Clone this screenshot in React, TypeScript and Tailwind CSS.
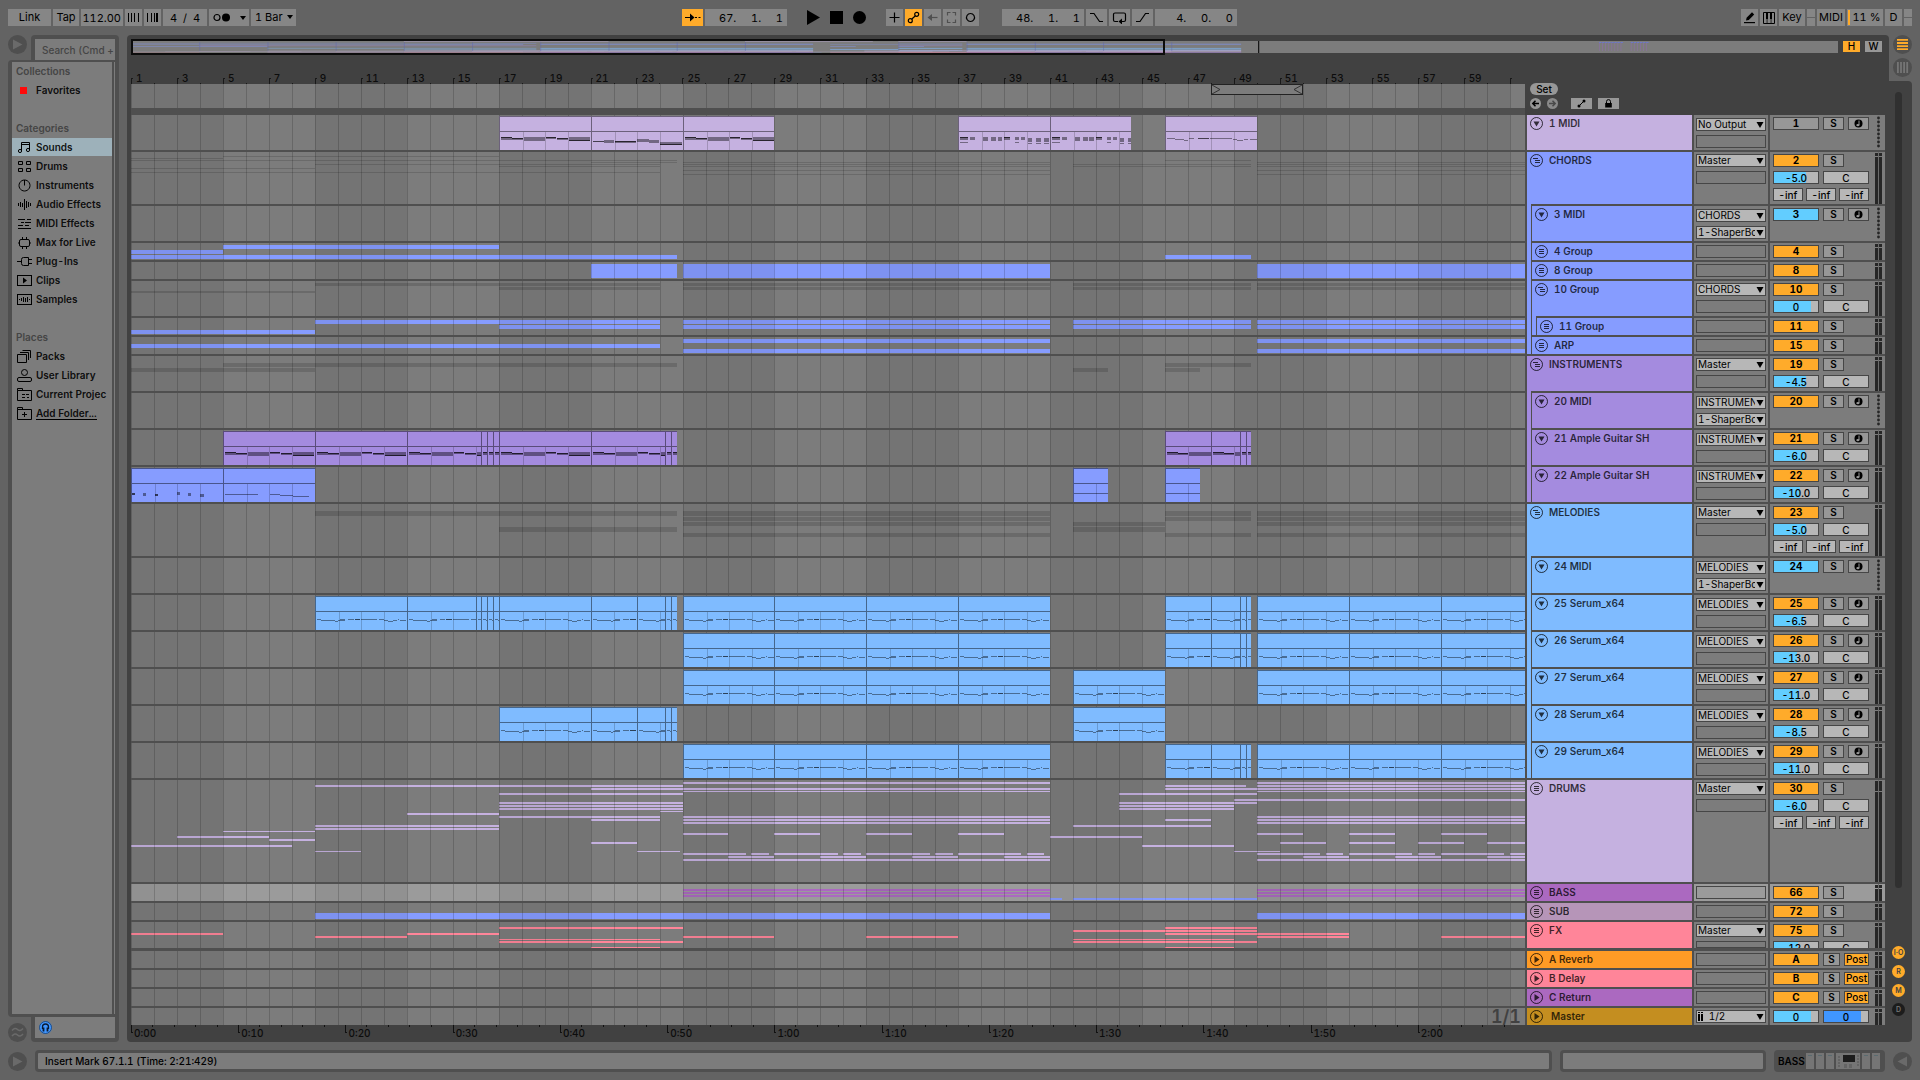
import type { ReactNode } from "react";
import clsx from "clsx";

const BARS = 60.66;
const SONG_END = 66.1;
const OVERVIEW_BARS = 100.1;

type Span = [start: number, end: number];
type Strip = { y: number; h: number; spans: Span[]; color?: string };
type Notes = "serum" | "guitar" | "piano" | "stabs" | "thin" | "dots" | "line" | "none";
type Clip = { at: number[]; notes: Notes; color?: string };

interface Track {
  name: string;
  label: string;
  color: string;
  height: string;
  px: number;
  level?: 0 | 1 | 2;
  icon: "fold" | "group" | "list" | "play";
  outputs?: string[];
  state?: "on" | "off" | "blue";
  arm?: boolean;
  post?: boolean;
  volume?: [text: string, fill: number];
  sends?: boolean;
  midiMeter?: boolean;
  selected?: boolean;
  clips?: Clip[];
  strips?: Strip[];
  shadow?: boolean;
}

const BLUE = "#869cff";
const SKY = "#7fbbff";
const LILAC = "#c5b1e0";
const VIOLET = "#a48bdf";
const PINK = "#ff8599";
const ORCHID = "#ab69c0";

const s = (y: number, h: number, ...spans: Span[]): Strip => ({ y, h, spans });
const main: Span[] = [[25, 41], [50, SONG_END]];

const serumClips = (...at: number[][]): Clip[] => at.map((a) => ({ at: a, notes: "serum" as Notes }));
const VERSE = [25, 29, 33, 37, 41];
const DROP = [46, 48, 49.25, 49.5, 49.75];
const OUTRO = [50, 54, 58, 62, SONG_END];

const tracks: Track[] = [
  {
    name: "1 MIDI", label: "1", color: LILAC, height: "h-[35px]", px: 35, icon: "fold",
    outputs: ["No Output"], state: "off", arm: true, midiMeter: true,
    clips: [
      { at: [17, 21], notes: "guitar" },
      { at: [21, 25], notes: "piano" },
      { at: [25, 29], notes: "guitar" },
      { at: [37, 41], notes: "stabs" },
      { at: [41, 44.5], notes: "stabs" },
      { at: [46, 50], notes: "thin" },
    ],
  },
  {
    name: "CHORDS", label: "2", color: BLUE, height: "h-[52px]", px: 52, icon: "group",
    outputs: ["Master"], volume: ["-5.0", 73], sends: true, shadow: true,
    strips: [
      s(4, 1, [5, 17]),
      s(6, 1, [1, 5]),
      s(8, 1, [1, 24.77], [46, 49.75]),
      s(10, 1, [21, 24.77], ...main),
      s(12, 1, [9, 24], [42, 49.75], ...main),
      s(14, 1, [17, 24], [42, 49.75], ...main),
      s(16, 1, [1, 9]),
      s(18, 1, ...main),
      s(20, 1, [1, 24]),
      s(22, 1, ...main),
    ],
  },
  {
    name: "3 MIDI", label: "3", color: BLUE, height: "h-[35px]", px: 35, level: 1, icon: "fold",
    outputs: ["CHORDS", "1-ShaperBox"], state: "blue", arm: true, midiMeter: true,
  },
  {
    name: "4 Group", label: "4", color: BLUE, height: "h-[17px]", px: 17, level: 1, icon: "list",
    strips: [s(2, 4, [5, 17]), s(7, 4, [1, 5]), s(12, 4, [1, 24.77], [46, 49.75])],
  },
  {
    name: "8 Group", label: "8", color: BLUE, height: "h-[17px]", px: 17, level: 1, icon: "list",
    strips: [s(2, 14, [21, 24.77], ...main)],
  },
  {
    name: "10 Group", label: "10", color: BLUE, height: "h-[35px]", px: 35, level: 1, icon: "group",
    outputs: ["CHORDS"], volume: ["0", 84], shadow: true,
    strips: [
      s(2, 3, [9, 24], [42, 49.75], ...main),
      s(6, 3, [17, 24], [42, 49.75], ...main),
      s(10, 2, [1, 9]),
    ],
  },
  {
    name: "11 Group", label: "11", color: BLUE, height: "h-[17px]", px: 17, level: 2, icon: "list",
    strips: [
      s(2, 4, [9, 24], [42, 49.75], ...main),
      s(7, 4, [17, 24], [42, 49.75], ...main),
      s(12, 4, [1, 9]),
    ],
  },
  {
    name: "ARP", label: "15", color: BLUE, height: "h-[17px]", px: 17, level: 1, icon: "list",
    strips: [s(2, 4, ...main), s(7, 4, [1, 24]), s(12, 4, ...main)],
  },
  {
    name: "INSTRUMENTS", label: "19", color: VIOLET, height: "h-[35px]", px: 35, icon: "group",
    outputs: ["Master"], volume: ["-4.5", 72], shadow: true,
    strips: [s(7, 4, [5, 24.77], [46, 49.75]), s(12, 4, [1, 9], [42, 43.5], [46, 47.5])],
  },
  {
    name: "20 MIDI", label: "20", color: VIOLET, height: "h-[35px]", px: 35, level: 1, icon: "fold",
    outputs: ["INSTRUMENTS", "1-ShaperBox"], arm: true, midiMeter: true,
  },
  {
    name: "21 Ample Guitar SH", label: "21", color: VIOLET, height: "h-[35px]", px: 35, level: 1, icon: "fold",
    outputs: ["INSTRUMENTS"], arm: true, volume: ["-6.0", 70],
    clips: [
      { at: [5, 9, 13, 16.25, 16.5, 16.77, 17, 21, 24.25, 24.5, 24.77], notes: "guitar" },
      { at: [46, 48, 49.25, 49.5, 49.75], notes: "guitar" },
    ],
  },
  {
    name: "22 Ample Guitar SH", label: "22", color: VIOLET, height: "h-[35px]", px: 35, level: 1, icon: "fold",
    outputs: ["INSTRUMENTS"], arm: true, volume: ["-10.0", 58],
    clips: [
      { at: [1, 5], notes: "dots", color: BLUE },
      { at: [5, 9], notes: "line", color: BLUE },
      { at: [42, 43.5], notes: "none", color: BLUE },
      { at: [46, 47.5], notes: "none", color: BLUE },
    ],
  },
  {
    name: "MELODIES", label: "23", color: SKY, height: "h-[52px]", px: 52, icon: "group",
    outputs: ["Master"], volume: ["-5.0", 73], sends: true, shadow: true,
    strips: [
      s(7, 5, [9, 24.77], [46, 49.75], ...main),
      s(13, 4, [46, 49.75], ...main),
      s(18, 4, [42, 46], ...main),
      s(23, 5, [17, 24.77], [42, 46]),
      s(29, 4, [46, 49.75], ...main),
    ],
  },
  {
    name: "24 MIDI", label: "24", color: SKY, height: "h-[35px]", px: 35, level: 1, icon: "fold",
    outputs: ["MELODIES", "1-ShaperBox"], state: "blue", arm: true, midiMeter: true,
  },
  {
    name: "25 Serum_x64", label: "25", color: SKY, height: "h-[35px]", px: 35, level: 1, icon: "fold",
    outputs: ["MELODIES"], arm: true, volume: ["-6.5", 68],
    clips: serumClips([9, 13, 16, 16.25, 16.5, 16.77, 17, 21, 23, 24.25, 24.5, 24.77], VERSE, DROP, OUTRO),
  },
  {
    name: "26 Serum_x64", label: "26", color: SKY, height: "h-[35px]", px: 35, level: 1, icon: "fold",
    outputs: ["MELODIES"], arm: true, volume: ["-13.0", 53],
    clips: serumClips(VERSE, DROP, OUTRO),
  },
  {
    name: "27 Serum_x64", label: "27", color: SKY, height: "h-[35px]", px: 35, level: 1, icon: "fold",
    outputs: ["MELODIES"], arm: true, volume: ["-11.0", 56],
    clips: serumClips(VERSE, [42, 46], OUTRO),
  },
  {
    name: "28 Serum_x64", label: "28", color: SKY, height: "h-[35px]", px: 35, level: 1, icon: "fold",
    outputs: ["MELODIES"], arm: true, volume: ["-8.5", 63],
    clips: serumClips([17, 21, 23, 24.25, 24.5, 24.77], [42, 46]),
  },
  {
    name: "29 Serum_x64", label: "29", color: SKY, height: "h-[35px]", px: 35, level: 1, icon: "fold",
    outputs: ["MELODIES"], arm: true, volume: ["-11.0", 56],
    clips: serumClips(VERSE, DROP, OUTRO),
  },
  {
    name: "DRUMS", label: "30", color: LILAC, height: "h-[102px]", px: 102, icon: "list",
    outputs: ["Master"], volume: ["-6.0", 70], sends: true,
    strips: [
      s(2, 2, ...main),
      s(5, 2, [9, 25], [46, 49.5], [50, SONG_END]),
      s(8, 2, [21, 25], [25, 41], [46, SONG_END]),
      s(11, 1, ...main),
      s(13, 2, [17, 25], [44, 50]),
      s(19, 2, [49, SONG_END]),
      s(22, 2, [17, 25], [44, 50]),
      s(25, 2, [17, 25], [44, 49]),
      s(28, 2, [17, 25], [44, 49]),
      s(31, 1, [24, 25]),
      s(33, 2, [13, 17]),
      s(36, 2, [17, 24], ...main),
      s(39, 2, [21, 24], [46, 48], ...main),
      s(42, 2, ...main),
      s(45, 2, [9, 17], [42, 48]),
      s(48, 2, [9, 17]),
      s(51, 1, [5, 9]),
      s(53, 2, [25, 27], [29, 31], [33, 35], [37, 39], [50, 52], [54, 56], [58, 60]),
      s(56, 2, [3, 7], [41, 45]),
      s(59, 2, [7, 9]),
      s(62, 2, [21, 23], [51, 53], [54, 56], [57, 59], [60, 62]),
      s(65, 2, [1, 8], [45, 49]),
      s(71, 1, [9, 11], [23, 24.9], [49, 51]),
      s(73, 2,
        [25, 27.75], [28, 28.75], [29, 31.75], [32, 32.75], [33, 35.75], [36, 36.75], [37, 39.75], [40, 40.75],
        [50, 52.75], [53, 53.75], [54, 56.75], [57, 57.75], [58, 60.75], [61, 61.75]),
      s(76, 2, [27, 29], [31, 33], [35, 37], [39, 41], [52, 54], [56, 58], [60, 62]),
      s(79, 2, ...main),
    ],
  },
  {
    name: "BASS", label: "66", color: ORCHID, height: "h-[17px]", px: 17, icon: "list", selected: true,
    strips: [
      s(5, 2, ...main),
      s(8, 2, ...main),
      s(11, 2, ...main),
      { y: 14, h: 2, spans: [[41, 41.5], [42, 50]], color: BLUE },
    ],
  },
  {
    name: "SUB", label: "72", color: "#b695b8", height: "h-[17px]", px: 17, icon: "list",
    strips: [{ y: 10, h: 6, spans: [[9, 41], [50, SONG_END]], color: BLUE }],
  },
  {
    name: "FX", label: "75", color: PINK, height: "h-[26px]", px: 26, icon: "list",
    outputs: ["Master"], volume: ["-12.0", 54],
    strips: [
      s(5, 2, [17, 25], [46, 50]),
      s(8, 2, [42, 50]),
      s(11, 2, [1, 5], [13, 17], [46, 54]),
      s(14, 2, [9, 13], [25, 29], [33, 37], [50, 54], [58, 62]),
      s(17, 1, [17, 24], [42, 49]),
      s(19, 2, [17, 25], [42, 50]),
      s(25, 1, [21, 24], [46, 49]),
    ],
  },
];

const returns: Track[] = [
  { name: "A Reverb", label: "A", color: "#ff9b25", height: "h-[17px]", px: 17, icon: "play", post: true },
  { name: "B Delay", label: "B", color: PINK, height: "h-[17px]", px: 17, icon: "play", post: true },
  { name: "C Return", label: "C", color: ORCHID, height: "h-[17px]", px: 17, icon: "play", post: true },
];

const pct = (bar: number) => `${((bar - 1) / BARS) * 100}%`;
const width = (a: number, b: number) => `${((b - a) / BARS) * 100}%`;

/* ---------- timeline ---------- */

const barNumbers = Array.from({ length: 61 }, (_, i) => i + 1);

const Grid = () => (
  <g fill="#000">
    {barNumbers.filter((b) => b % 8 === 1).map((b) => (
      <rect key={b} x={pct(b)} width={width(0, 4)} height="100%" opacity=".06" />
    ))}
    {barNumbers.map((b) => (
      <rect key={b} x={pct(b)} width="1" height="100%" opacity=".17" />
    ))}
  </g>
);

// [x, y, width, height, dark?] inside a four bar clip, 92 units wide
const noteShapes: Record<Notes, number[][]> = {
  serum: [
    [1, 7, 4, 1, 0], [5, 8, 14, 1, 0], [19, 9, 3, 1, 0], [22, 8, 2, 1, 0], [24, 7, 5, 2, 0],
    [32, 7, 6, 1, 0], [39, 7, 6, 1, 1], [46, 7, 16, 1, 0], [64, 7, 5, 1, 0], [69, 8, 4, 1, 0],
    [73, 9, 5, 1, 0], [78, 8, 4, 1, 0], [83, 7, 1, 1, 0], [85, 8, 6, 1, 0],
  ],
  guitar: [
    [1, 5, 11, 3, 0], [1, 5, 11, 1, 1], [12, 6, 11, 2, 0], [12, 6, 11, 1, 1], [24, 5, 22, 4, 0],
    [47, 5, 10, 2, 0], [47, 5, 10, 1, 1], [58, 6, 11, 2, 0], [58, 6, 11, 1, 1], [70, 5, 21, 4, 0], [70, 8, 21, 1, 1],
  ],
  piano: [
    [1, 9, 11, 1, 1], [12, 8, 10, 3, 0], [23, 9, 22, 2, 0], [23, 9, 22, 1, 1], [46, 7, 12, 3, 0],
    [58, 8, 10, 3, 0], [69, 10, 22, 3, 0], [69, 12, 22, 1, 1],
  ],
  stabs: [
    [1, 5, 8, 3, 0], [1, 5, 8, 1, 1], [1, 10, 8, 1, 0], [11, 5, 5, 3, 0], [24, 5, 5, 4, 0], [32, 5, 5, 4, 0],
    [39, 5, 5, 4, 0], [46, 5, 6, 3, 0], [46, 5, 6, 1, 1], [57, 5, 4, 3, 0], [63, 5, 4, 3, 0], [70, 6, 4, 4, 0],
    [78, 6, 5, 4, 0], [86, 6, 5, 4, 0], [57, 10, 4, 1, 0], [70, 11, 4, 1, 0], [78, 11, 5, 1, 0], [86, 11, 5, 1, 0],
  ],
  thin: [
    [1, 6, 8, 1, 0], [9, 7, 9, 1, 0], [18, 8, 4, 1, 0], [23, 6, 5, 1, 0], [32, 6, 12, 1, 1], [45, 6, 22, 1, 0],
    [68, 7, 4, 1, 0], [72, 8, 6, 1, 0], [79, 7, 4, 1, 0], [85, 7, 7, 1, 0],
  ],
  dots: [
    [0, 9, 3, 2, 1], [11, 9, 3, 3, 0], [23, 10, 3, 2, 1], [46, 8, 3, 3, 0], [57, 9, 3, 3, 0], [69, 10, 4, 3, 0],
  ],
  line: [[1, 10, 33, 1, 0], [47, 10, 10, 1, 0], [57, 11, 13, 1, 0], [70, 12, 16, 1, 0]],
  none: [[0, 9, 92, 1, 0]],
};

const ClipBox = ({ from, to, notes, color }: { from: number; to: number; notes: Notes; color: string }) => {
  const length = to - from;
  const beats = barNumbers.filter((b) => b > from && b < to);
  return (
    <div
      className="absolute top-px bottom-0 flex flex-col overflow-hidden border-t border-l border-black/45"
      style={{ left: pct(from), width: width(from, to), backgroundColor: color }}
    >
      <div className="h-[15px] shrink-0 border-b border-black/45" />
      <svg className="block h-[18px] w-full" shapeRendering="crispEdges">
        {beats.map((b) => (
          <rect key={b} x={`${((b - from) / length) * 100}%`} width="1" height="18" fill="#000" opacity=".18" />
        ))}
        {noteShapes[notes].map(([x, y, w, h, dark], i) => (
          <rect
            key={i}
            x={`${(x / 23 / length) * 100}%`}
            y={y}
            width={`${(w / 23 / length) * 100}%`}
            height={h}
            opacity={dark ? 0.65 : 0.42}
          />
        ))}
      </svg>
    </div>
  );
};

const Lane = ({ track }: { track: Track }) => (
  <div className={clsx("relative min-w-0 flex-1 overflow-hidden", track.selected ? "bg-[#9b9b9b]" : "bg-[#7c7c7c]")}>
    <svg className="block h-full w-full" shapeRendering="crispEdges">
      {track.strips?.map((strip) =>
        strip.spans.map(([a, b]) => (
          <rect
            key={`${strip.y}-${a}`}
            x={pct(a)}
            y={strip.y}
            width={width(a, b)}
            height={strip.h}
            fill={track.shadow ? "#000" : strip.color ?? track.color}
            opacity={track.shadow ? 0.14 : 1}
          />
        ))
      )}
      <Grid />
    </svg>
    {track.clips?.map((clip) =>
      clip.at.slice(0, -1).map((from, i) => (
        <ClipBox
          key={from}
          from={from}
          to={clip.at[i + 1]}
          notes={clip.notes}
          color={clip.color ?? track.color}
        />
      ))
    )}
  </div>
);

/* ---------- track header ---------- */

const HeaderIcon = ({ kind }: { kind: Track["icon"] }) => (
  <svg viewBox="0 0 13 13" className="size-[13px]" fill="none" stroke="#000" strokeOpacity=".75">
    <circle cx="6.5" cy="6.5" r="6" />
    {kind === "fold" && <path d="M3.5 4.5h6l-3 5z" fill="#000" fillOpacity=".75" stroke="none" />}
    {kind === "play" && <path d="M4.5 3v7l5-3.5z" fill="#000" fillOpacity=".75" stroke="none" />}
    {kind === "list" && <path d="M4 4.5h5M4 6.5h5M4 8.5h5" />}
    {kind === "group" && <path d="M3 4.5h5M5 6.5h5M5 8.5h5" />}
  </svg>
);

const TrackHeader = ({ track }: { track: Track }) => {
  const level = track.level ?? 0;
  return (
    <div className="flex w-[165px] shrink-0">
      {level > 0 && (
        <div className="-mt-0.5 w-1 shrink-0" style={{ backgroundColor: track.color }} />
      )}
      {level > 1 && (
        <div className="-mt-0.5 ml-px w-1 shrink-0" style={{ backgroundColor: track.color }} />
      )}
      <div
        className={clsx("flex min-w-0 flex-1 gap-1.5 pt-0.5 pl-[3px]", level > 0 && "ml-px")}
        style={{ backgroundColor: track.color }}
      >
        <button className="size-[13px] shrink-0" aria-label={`Fold ${track.name}`}>
          <HeaderIcon kind={track.icon} />
        </button>
        <span className="truncate text-[10px] leading-3 font-semibold text-black/75">{track.name}</span>
      </div>
    </div>
  );
};

const OutputSelect = ({ value, label }: { value: string; label: string }) => (
  <div className="relative h-[13px] border border-[#464646] bg-[#b7b7b7]">
    <select
      aria-label={label}
      className="block h-[11px] w-full appearance-none overflow-hidden pr-2.5 pl-px text-[10px] leading-[11px] text-black outline-none"
    >
      <option>{value}</option>
    </select>
    <svg viewBox="0 0 8 6" className="pointer-events-none absolute top-[3px] right-px h-1.5 w-2">
      <path d="M.5 0h7L4 6z" />
    </svg>
  </div>
);

const EmptyBox = () => <div className="h-[13px] border border-[#464646]" />;

const panelBg = (track: Track) => (track.selected ? "bg-[#9b9b9b]" : "bg-[#7c7c7c]");

const TrackRouting = ({ track }: { track: Track }) => {
  const outs = track.outputs ?? [];
  const tall = track.icon === "fold";
  return (
    <div
      className={clsx("flex w-[74px] shrink-0 flex-col gap-1 overflow-hidden px-0.5", tall ? "pt-[3px]" : "pt-0.5", panelBg(track))}
    >
      {outs.map((o) => (
        <OutputSelect key={o} value={o} label={`${track.name} output`} />
      ))}
      {outs.length < 2 && <EmptyBox />}
    </div>
  );
};

const StereoMeter = ({ split = 3 }: { split?: number }) => (
  <svg className="h-full w-[7px]" shapeRendering="crispEdges" fill="#262626">
    <rect y="1" width="3" height={split} />
    <rect x="4" y="1" width="3" height={split} />
    <rect y={split + 2} width="3" height="100%" />
    <rect x="4" y={split + 2} width="3" height="100%" />
    <rect x="3" width="1" height="100%" fill="#6c6c6c" />
  </svg>
);

const DotMeter = () => (
  <svg viewBox="0 0 7 35" className="h-[35px] w-[7px]" fill="#262626">
    {[0, 1, 2, 3, 4, 5, 6, 7].map((i) => (
      <circle key={i} cx="3.5" cy={3 + i * 4} r="1.4" />
    ))}
  </svg>
);

const Field = ({ value, label, className, fill, fillColor = "#62cdff" }: {
  value: string;
  label: string;
  className: string;
  fill?: number;
  fillColor?: string;
}) => (
  <input
    readOnly
    aria-label={label}
    value={value}
    className={clsx("block h-[13px] border border-[#464646] bg-[#b7b7b7] text-center text-[10px] leading-[11px] font-medium text-black outline-none", className)}
    style={fill ? { backgroundImage: `linear-gradient(90deg, ${fillColor} ${fill}%, transparent ${fill}%)` } : undefined}
  />
);

const smallButton = "flex h-[13px] items-center justify-center border border-[#464646] text-[10px] leading-[11px] text-black";

const TrackMixer = ({ track }: { track: Track }) => (
  <div className={clsx("flex w-[115px] shrink-0 justify-between overflow-hidden px-[3px]", panelBg(track))}>
    <div className="flex flex-col gap-1 pt-0.5">
      <div className="flex gap-1">
        <button
          aria-label={`${track.name} activator`}
          className={clsx(
            smallButton,
            "w-[46px] font-bold",
            track.state === "off" && "bg-[#979797]",
            track.state === "blue" && "bg-[#62cdff]",
            !track.state && "bg-[#ffab2a]"
          )}
        >
          {track.label}
        </button>
        <button aria-label={`Solo ${track.name}`} className={clsx(smallButton, "bg-[#979797] font-semibold", track.post ? "w-[17px]" : "w-[21px]")}>
          S
        </button>
        {track.arm && (
          <button aria-label={`Arm ${track.name}`} className={clsx(smallButton, "w-[21px] bg-[#979797]")}>
            <svg viewBox="0 0 9 9" className="size-[9px]">
              <circle cx="4.5" cy="4.5" r="4" />
              <path d="M5 1.5v4.5" stroke="#979797" />
              <ellipse cx="3.9" cy="6.2" rx="1.6" ry="1.1" fill="#979797" />
            </svg>
          </button>
        )}
        {track.post && (
          <button aria-label={`${track.name} pre/post`} className={clsx(smallButton, "w-[25px] bg-[#ffab2a] font-medium")}>
            Post
          </button>
        )}
      </div>
      {track.volume && (
        <div className="flex gap-1">
          <Field value={track.volume[0]} fill={track.volume[1]} label={`${track.name} volume`} className="w-[46px]" />
          <Field value="C" label={`${track.name} pan`} className="w-[46px]" />
        </div>
      )}
      {track.sends && (
        <div className="flex gap-[3px]">
          {["A", "B", "C"].map((send) => (
            <Field key={send} value="-inf" label={`${track.name} send ${send}`} className="w-[30px]" />
          ))}
        </div>
      )}
    </div>
    {track.midiMeter ? <DotMeter /> : <StereoMeter split={track.px > 60 ? 10 : 3} />}
  </div>
);

const TrackRow = ({ track }: { track: Track }) => (
  <div className={clsx("flex gap-0.5", track.height)}>
    <Lane track={track} />
    <TrackHeader track={track} />
    <TrackRouting track={track} />
    <TrackMixer track={track} />
  </div>
);

const MasterRow = () => (
  <div className="flex h-[17px] gap-0.5">
    <div className="relative min-w-0 flex-1 bg-[#7c7c7c]">
      <svg className="block h-full w-full" shapeRendering="crispEdges">
        <Grid />
      </svg>
      <span className="absolute right-1 bottom-0 text-lg leading-[17px] font-semibold text-[#414141]">1/1</span>
    </div>
    <div className="flex w-[165px] shrink-0 gap-2 bg-[#c48e20] pt-0.5 pl-[3px]">
      <button className="size-[13px]" aria-label="Fold Master">
        <HeaderIcon kind="play" />
      </button>
      <span className="text-[10px] leading-3 font-semibold text-black/75">Master</span>
    </div>
    <div className="w-[74px] shrink-0 bg-[#7c7c7c] px-0.5 pt-0.5">
      <div className="relative">
        <OutputSelect value={"\u00a0\u00a0\u00a0 1/2"} label="Master output" />
        <svg viewBox="0 0 5 9" className="pointer-events-none absolute top-0.5 left-0.5 h-[9px] w-[5px]" shapeRendering="crispEdges">
          <path d="M0 0h2v1H0zM3 0h2v1H3zM0 2h2v7H0zM3 2h2v7H3z" />
        </svg>
      </div>
    </div>
    <div className="flex w-[115px] shrink-0 justify-between bg-[#7c7c7c] px-[3px]">
      <div className="flex gap-1 pt-0.5">
        <Field value="0" fill={84} label="Master volume" className="w-[46px]" />
        <Field value="0" fill={84} fillColor="#4096ff" label="Cue volume" className="w-[46px]" />
      </div>
      <StereoMeter />
    </div>
  </div>
);

/* ---------- overview and rulers ---------- */

const Overview = () => {
  const x = (bar: number) => ((bar - 1) / OVERVIEW_BARS) * 1000;
  let top = 0;
  const shapes: ReactNode[] = [];
  tracks.forEach((t) => {
    const y = (top / 833) * 12;
    t.clips?.forEach((c) => {
      const last = c.at[c.at.length - 1];
      shapes.push(
        <rect key={`${t.name}${c.at[0]}`} x={x(c.at[0])} y={y} width={x(last) - x(c.at[0])} height=".6" fill={c.color ?? t.color} opacity=".6" />
      );
    });
    if (!t.shadow) {
      t.strips?.forEach((st) =>
        st.spans.forEach(([a, b]) =>
          shapes.push(
            <rect key={`${t.name}${st.y}-${a}`} x={x(a)} y={y + (st.y / 833) * 12} width={x(b) - x(a)} height={Math.max(0.25, (st.h / 833) * 12)} fill={st.color ?? t.color} opacity=".55" />
          )
        )
      );
    }
    top += t.px + 2;
  });
  return (
    <div className="relative h-4 min-w-0 flex-1 py-0.5">
      <svg viewBox="0 0 1000 12" preserveAspectRatio="none" className="block h-3 w-full bg-[#7c7c7c]">
        {shapes}
        {[5, 9, 13, 17, 21, 25, 29, 33, 37, 46, 50, 54, 58, 62].map((b) => (
          <rect key={b} x={x(b)} y="1" width=".6" height="9" fill="#5c64b0" opacity=".4" />
        ))}
        <rect x={x(67.1)} width=".6" height="12" />
        {[0, 3, 6, 9, 12, 15, 18, 21, 31, 34, 37, 40, 43, 46].map((i) => (
          <g key={i} transform={`translate(${860 + i * 0.6} 0)`}>
            <rect y="1" width="1.4" height="1" fill="#6d78c8" />
            <rect y="2" width=".5" height="8" fill="#8d6fa8" opacity=".7" />
          </g>
        ))}
      </svg>
      <div className="absolute inset-y-0 left-0 border-2 border-[#0c0c0c]" style={{ width: `${(BARS / OVERVIEW_BARS) * 100}%` }} />
    </div>
  );
};

const BarRuler = () => (
  <div className="flex h-[29px] items-end overflow-hidden text-[#0c0c0c]">
    {Array.from({ length: 31 }, (_, i) => i * 2 + 1).map((bar) => (
      <div key={bar} className="flex h-3 shrink-0 items-end" style={{ width: width(0, 2) }}>
        <div className="flex w-1/2 items-end">
          <div className="h-1.5 w-0.5 border-t border-l border-[#191919]" />
          <span className="mb-px pl-[3px] text-[10px] leading-[10px] font-medium">{bar < 61 && bar}</span>
        </div>
        <div className="h-px w-px bg-[#191919]" />
      </div>
    ))}
  </div>
);

const SECONDS = (BARS * 240) / 112;

const TimeRuler = () => (
  <div className="flex h-[17px] overflow-hidden">
    {Array.from({ length: 14 }, (_, i) => i * 10).map((t) => (
      <div key={t} className="relative shrink-0" style={{ width: `${(10 / SECONDS) * 100}%` }}>
        <svg className="absolute h-2 w-full" shapeRendering="crispEdges" fill="#111">
          <rect width="1" height="8" />
          <rect y="7" width="2" height="1" />
          {[20, 40, 60, 80].map((p) => (
            <rect key={p} x={`${p}%`} width="1" height="2" />
          ))}
        </svg>
        {t < 130 && (
          <span className="block pt-0.5 pl-[3px] text-[10px] leading-3 font-medium text-[#0c0c0c]">
            {Math.floor(t / 60)}:{String(t % 60).padStart(2, "0")}
          </span>
        )}
      </div>
    ))}
  </div>
);

const ScrubArea = () => (
  <div className="relative h-6 bg-[#7c7c7c]">
    <svg className="block h-full w-full" shapeRendering="crispEdges">
      <Grid />
    </svg>
    <div
      className="absolute top-0 flex h-[11px] justify-between border border-[#222] bg-[#7c7c7c]"
      style={{ left: pct(48), width: width(0, 4) }}
    >
      <svg viewBox="0 0 9 9" className="size-[9px]" fill="none" stroke="#333">
        <path d="M0 0l8 4.5L0 9" />
      </svg>
      <svg viewBox="0 0 9 9" className="size-[9px]" fill="none" stroke="#333">
        <path d="M9 0L1 4.5 9 9" />
      </svg>
    </div>
  </div>
);

const LocatorTools = () => (
  <div className="flex flex-col gap-[3px] pt-[28px] pl-[3px]">
    <button className="h-3 w-7 rounded-full bg-[#979797] text-[10px] leading-3 font-medium text-black">Set</button>
    <div className="flex items-center">
      <button aria-label="Previous locator" className="size-[11px] rounded-full bg-[#979797]">
        <svg viewBox="0 0 11 11" fill="none" stroke="#000" strokeWidth="1.5">
          <path d="M9 5.5H3M5.5 2.8L2.8 5.5l2.7 2.7" />
        </svg>
      </button>
      <button aria-label="Next locator" className="ml-1.5 size-[11px] rounded-full bg-[#8a8a8a]">
        <svg viewBox="0 0 11 11" fill="none" stroke="#4a4a4a" strokeWidth="1.5">
          <path d="M2 5.5h6M5.5 2.8l2.7 2.7-2.7 2.7" />
        </svg>
      </button>
      <button aria-label="Automation mode" className="ml-[13px] flex h-[11px] w-[21px] items-center justify-center bg-[#979797]">
        <svg viewBox="0 0 9 9" className="size-[9px]">
          <path d="M2 7l5-5" stroke="#000" />
          <circle cx="2" cy="7" r="1.5" />
          <circle cx="7" cy="2" r="1.5" />
        </svg>
      </button>
      <button aria-label="Lock envelopes" className="ml-1.5 flex h-[11px] w-[21px] items-center justify-center bg-[#979797]">
        <svg viewBox="0 0 9 9" className="size-[9px]">
          <path d="M2.5 4V2.6a2 2 0 0 1 4 0V4" fill="none" stroke="#000" />
          <path d="M1.2 4h6.6v4.5H1.2z" />
        </svg>
      </button>
    </div>
  </div>
);

/* ---------- top bar ---------- */

const TopButton = ({ className, label, children }: { className: string; label?: string; children?: ReactNode }) => (
  <button
    aria-label={label}
    className={clsx("flex h-[17px] shrink-0 items-center justify-center text-[11px] leading-[17px]", className)}
  >
    {children}
  </button>
);

const gray = "bg-[#868686]";

const Position = ({ value, label }: { value: string; label: string }) => (
  <input
    readOnly
    aria-label={label}
    value={value}
    className="h-[17px] w-[82px] bg-[#868686] pr-1 text-right text-[11px] text-black outline-none"
  />
);

const Stroke = ({ d, w = 13, children }: { d: string; w?: number; children?: ReactNode }) => (
  <svg viewBox={`0 0 ${w} 13`} className="h-[13px]" width={w} fill="none" stroke="currentColor" strokeWidth="1.2">
    <path d={d} />
    {children}
  </svg>
);

const SplitLamp = () => (
  <div className="flex w-2 flex-col gap-px">
    <div className="flex-1 bg-[#868686]" />
    <div className="flex-1 bg-[#868686]" />
  </div>
);

const TopBar = () => (
  <header className="flex px-2 py-[9px] text-black">
    <div className="flex gap-0.5">
      <TopButton className={clsx(gray, "w-[43px]")}>Link</TopButton>
      <TopButton className={clsx(gray, "w-[26px]")}>Tap</TopButton>
      <input readOnly aria-label="Tempo" value="112.00" className="h-[17px] w-[42px] bg-[#868686] pr-0.5 text-right text-[11px] text-black outline-none" />
      <TopButton label="Nudge down" className={clsx(gray, "w-[17px]")}>
        <svg viewBox="0 0 13 9" className="h-[9px] w-[13px]" shapeRendering="crispEdges">
          <path d="M1 0h1v9H1zM4 0h1v9H4zM7 0h1v9H7zM11 0h1v9h-1z" />
        </svg>
      </TopButton>
      <TopButton label="Nudge up" className={clsx(gray, "w-[17px]")}>
        <svg viewBox="0 0 13 9" className="h-[9px] w-[13px]" shapeRendering="crispEdges">
          <path d="M1 0h1v9H1zM5 0h1v9H5zM8 0h1v9H8zM10 0h2v9h-2z" />
        </svg>
      </TopButton>
      <input readOnly aria-label="Time signature" value="4  /  4" className="h-[17px] w-11 bg-[#868686] text-center text-[11px] text-black outline-none" />
      <TopButton label="Metronome" className={clsx(gray, "w-10 gap-2.5")}>
        <svg viewBox="0 0 17 9" className="h-[9px] w-[17px]">
          <circle cx="4" cy="4.5" r="3" fill="none" stroke="#000" strokeWidth="1.2" />
          <circle cx="13" cy="4.5" r="4" />
        </svg>
        <svg viewBox="0 0 6 4" className="h-1 w-1.5"><path d="M0 0h6L3 4z" /></svg>
      </TopButton>
      <div className="relative">
        <select aria-label="Quantization" className="block h-[17px] w-[45px] appearance-none bg-[#868686] pl-1 text-[11px] leading-[17px] text-black outline-none">
          <option>1 Bar</option>
        </select>
        <svg viewBox="0 0 6 4" className="pointer-events-none absolute top-1.5 right-[3px] h-1 w-1.5"><path d="M0 0h6L3 4z" /></svg>
      </div>
    </div>

    <div className="grow-[386]" />

    <div className="flex items-start gap-0.5">
      <TopButton label="Follow" className="w-[21px] bg-[#ffab2a]">
        <Stroke w={17} d="M1 6.5h6M11 6.5h2M14.5 6.5h2">
          <path d="M6 2.5l4.5 4-4.5 4z" fill="#000" stroke="none" />
        </Stroke>
      </TopButton>
      <Position label="Arrangement position" value="67.     1.     1" />
      <div className="flex gap-2.5 px-[18px]">
        <button aria-label="Play" className="h-[17px]">
          <svg viewBox="0 0 13 15" className="h-[15px] w-[13px]"><path d="M0 0l13 7.5L0 15z" /></svg>
        </button>
        <button aria-label="Stop" className="h-[17px]">
          <svg viewBox="0 0 13 13" className="size-[13px]"><path d="M0 0h13v13H0z" /></svg>
        </button>
        <button aria-label="Record" className="h-[17px]">
          <svg viewBox="0 0 13 13" className="size-[13px]"><circle cx="6.5" cy="6.5" r="6.5" /></svg>
        </button>
      </div>
      <TopButton label="Overdub" className={clsx(gray, "w-[17px]")}><Stroke d="M6.5 1.5v10M1.5 6.5h10" /></TopButton>
      <TopButton label="Automation arm" className="w-[17px] bg-[#ffab2a]">
        <Stroke d="M4.6 8.2L8.4 4.8">
          <circle cx="3.3" cy="9.7" r="2" />
          <circle cx="9.7" cy="3.3" r="2" />
        </Stroke>
      </TopButton>
      <TopButton label="Re-enable automation" className={clsx(gray, "w-[17px] text-[#4f4f4f]")}>
        <Stroke d="M5 6.5h6.5"><path d="M1.5 6.5l4.5-3.5v7z" fill="currentColor" stroke="none" /></Stroke>
      </TopButton>
      <TopButton label="Capture MIDI" className={clsx(gray, "w-[17px] text-[#4f4f4f]")}>
        <Stroke d="M2.5 4.500v-3h3M7.500 1.500h3v3M10.500 8.500v3h-3M5.500 11.500h-3v-3" />
      </TopButton>
      <TopButton label="Session record" className={clsx(gray, "w-[17px]")}>
        <Stroke d="M6.5 2.5a4 4 0 1 0 .01 0z" />
      </TopButton>
      <div className="ml-[21px] flex gap-0.5">
        <Position label="Loop start" value="48.     1.     1" />
        <TopButton label="Punch in" className={clsx(gray, "w-[21px]")}><Stroke w={15} d="M1 2.5h4l5.5 8H14" /></TopButton>
        <TopButton label="Loop" className={clsx(gray, "w-[21px]")}>
          <Stroke w={15} d="M6 10.5H3A1.5 1.5 0 0 1 1.5 9V3.5A1.5 1.5 0 0 1 3 2h9a1.5 1.5 0 0 1 1.5 1.5V9a1.5 1.5 0 0 1-1.5 1.5H9.5">
            <path d="M10 7.5v6l-3.5-3z" fill="#000" stroke="none" />
          </Stroke>
        </TopButton>
        <TopButton label="Punch out" className={clsx(gray, "w-[21px]")}><Stroke w={15} d="M1 10.5h4l5.5-8H14" /></TopButton>
        <Position label="Loop length" value="4.     0.     0" />
      </div>
    </div>

    <div className="grow-[504]" />

    <div className="flex gap-0.5">
      <TopButton label="Draw mode" className={clsx(gray, "w-[17px]")}>
        <svg viewBox="0 0 13 13" className="size-[13px]">
          <path d="M3 9.5l.6-2.8L9 1.3l2.2 2.2L5.8 9z" />
          <path d="M1 11h11v1.2H1z" />
        </svg>
      </TopButton>
      <TopButton label="Computer MIDI keyboard" className={clsx(gray, "w-[17px]")}>
        <svg viewBox="0 0 12 12" className="size-3">
          <path d="M.5.5h11v11H.5z" fill="none" stroke="#000" />
          <path d="M3 1h2v6H3zM7 1h2v6H7zM3.7 7h.7v4h-.7zM7.7 7h.7v4h-.7z" />
        </svg>
      </TopButton>
      <TopButton className={clsx(gray, "w-[26px]")}>Key</TopButton>
      <SplitLamp />
      <TopButton className={clsx(gray, "w-7")}>MIDI</TopButton>
      <div className="flex h-[17px] w-9 bg-[#868686] py-px pl-px text-[11px] leading-[15px]">
        <div className="w-0.5 bg-[#ffab2a]" />
        <span className="flex-1 text-center whitespace-nowrap">11 %</span>
      </div>
      <TopButton className={clsx(gray, "w-[17px]")}>D</TopButton>
      <SplitLamp />
    </div>
  </header>
);

/* ---------- browser ---------- */

const categoryIcons: Record<string, ReactNode> = {
  Sounds: <><path d="M4.5 11V2.5h8V10M4.5 4.5h8" /><circle cx="3" cy="11" r="1.6" /><circle cx="11" cy="10" r="1.6" /></>,
  Drums: <path d="M1.5 2.5h4v3h-4zM9.5 2.5h4v3h-4zM1.5 9.5h4v3h-4zM9.5 9.5h4v3h-4z" />,
  Instruments: <path d="M7.5 2a5.5 5.5 0 1 0 .01 0zM7.5 2v5.5" />,
  "Audio Effects": <path d="M1.5 6v3M3.5 5v5M5.5 6v4M7.5 2v11M9.5 4v7M11.5 5v5M13.5 6v3" />,
  "MIDI Effects": <path d="M1 3.5h7M10 3.5h4M4 6.5h3M8 6.5h6M1 9.5h5M8 9.5h4M1 12.5h13" />,
  "Max for Live": <><rect x="2.5" y="4.5" width="10" height="7" rx="1.5" /><path d="M5.5 2v2.5M9.5 2v2.5M5.5 11.5V14M9.5 11.5V14M1 8h1.5M12.5 8H14" /></>,
  "Plug-Ins": <path d="M0 7.5h4M11.5 3.5h-5a2 2 0 0 0-2 2v4a2 2 0 0 0 2 2h5zM11.5 5.5H15M11.5 9.5H15" />,
  Clips: <><rect x=".5" y="2.5" width="14" height="10" /><path d="M6 4.5l4 3-4 3z" fill="#000" stroke="none" /></>,
  Samples: <><rect x=".5" y="2.5" width="14" height="10" /><path d="M2.5 7v1M4.5 6v3M6.5 5v5M8.5 6v4M10.5 5v5M12.5 7v1" /></>,
  Packs: <path d="M.5 5.5h9v8h-9zM3 3.5h8.5V11M5.5 1.5h8V9" />,
  "User Library": <><circle cx="7.5" cy="4.5" r="3" /><rect x=".5" y="9.5" width="14" height="4" rx="1.5" /></>,
  "Current Projec": <path d="M.5 3.5h14v10H.5zM.5 3.5v-2h5v2M5 7.5h3M9 7.5h3M5 10.5h3M10 10.5h2" />,
  "Add Folder...": <path d="M.5 3.5h14v10H.5zM.5 3.5v-2h5v2M7.5 6v5M5 8.5h5" />,
};

const BrowserItem = ({ name, active }: { name: string; active?: boolean }) => (
  <li>
    <button className={clsx("flex h-[18px] w-full items-center gap-1 overflow-hidden pl-[5px] text-left", active && "bg-[#9db1ba]")}>
      {name === "Favorites" ? (
        <span className="mr-[5px] ml-[3px] size-[7px] shrink-0 bg-[#ff0a0a]" />
      ) : (
        <svg viewBox="0 0 15 15" className="size-[15px] shrink-0" fill="none" stroke="#000">
          {categoryIcons[name]}
        </svg>
      )}
      <span className={clsx("text-[10px] leading-3 font-semibold whitespace-nowrap text-black/90", name === "Add Folder..." && "border-b border-black")}>
        {name}
      </span>
    </button>
  </li>
);

const BrowserSection = ({ title, items }: { title: string; items: string[] }) => (
  <section className="flex flex-col gap-px">
    <h2 className="h-[18px] pl-1 text-[10px] leading-[18px] font-semibold text-[#454545]">{title}</h2>
    <ul className="flex flex-col gap-px">
      {items.map((item) => (
        <BrowserItem key={item} name={item} active={item === "Sounds"} />
      ))}
    </ul>
  </section>
);

const RoundToggle = ({ label, children }: { label: string; children: ReactNode }) => (
  <button aria-label={label} className="size-[19px] shrink-0 rounded-full bg-[#4f4f4f]">
    <svg viewBox="0 0 19 19" className="size-[19px]">{children}</svg>
  </button>
);

const Browser = () => (
  <aside className="flex w-[111px] shrink-0 flex-col">
    <div className="flex items-start justify-between">
      <RoundToggle label="Toggle browser"><path d="M5 4.5v10l9.5-5z" fill="#6a6a6a" /></RoundToggle>
      <div className="w-[88px] rounded-t bg-[#4f4f4f] px-1 pt-1">
        <input
          aria-label="Search"
          placeholder="Search (Cmd +"
          className="block h-[21px] w-full bg-[#7c7c7c] pl-[7px] text-[10px] font-medium text-black outline-none placeholder:text-[#454545]"
        />
      </div>
    </div>
    <div className="flex flex-1 gap-0.5 rounded-l bg-[#4f4f4f] pt-0.5 pr-1 pb-[3px] pl-1">
      <nav className="flex min-w-0 flex-1 flex-col gap-5 bg-[#7c7c7c]">
        <BrowserSection title="Collections" items={["Favorites"]} />
        <BrowserSection
          title="Categories"
          items={["Sounds", "Drums", "Instruments", "Audio Effects", "MIDI Effects", "Max for Live", "Plug-Ins", "Clips", "Samples"]}
        />
        <BrowserSection title="Places" items={["Packs", "User Library", "Current Projec", "Add Folder..."]} />
      </nav>
      <div className="w-px bg-[#7c7c7c]" />
    </div>
    <div className="flex items-end justify-between">
      <RoundToggle label="Groove pool">
        <path d="M4 7.5q3-3.500 5.500-1t5.500-1M4 13q3-3.500 5.500-1t5.500-1" fill="none" stroke="#6a6a6a" strokeWidth="1.5" />
      </RoundToggle>
      <div className="w-[88px] rounded-b bg-[#4f4f4f] px-1 pb-1">
        <div className="flex h-[21px] items-center bg-[#7c7c7c] pl-1">
          <button aria-label="Preview" className="size-[13px] rounded-full bg-[#4096ff]">
            <svg viewBox="0 0 13 13" fill="none" stroke="#0a1a33">
              <circle cx="6.5" cy="6.5" r="6" strokeOpacity=".6" />
              <path d="M3.5 8V6a3 3 0 0 1 6 0v2" strokeWidth="1.3" />
              <path d="M4.5 6.5v4M8.5 6.5v4" strokeWidth="1.8" />
            </svg>
          </button>
        </div>
      </div>
    </div>
  </aside>
);

/* ---------- arrangement ---------- */

const dots: [string, boolean][] = [["I·O", true], ["R", true], ["M", true], ["D", false]];

const Arrangement = () => (
  <main className="flex min-w-0 flex-1">
    <div className="flex min-w-0 flex-1 flex-col rounded-t rounded-bl bg-[#414141] px-1 pt-1">
      <div className="flex gap-[5px] pr-[3px]">
        <Overview />
        <button aria-label="Optimize height" className="mt-0.5 h-[11px] w-[17px] bg-[#ffab2a] text-[10px] leading-[11px] font-medium">H</button>
        <button aria-label="Optimize width" className="mt-0.5 h-[11px] w-[17px] bg-[#979797] text-[10px] leading-[11px] font-medium">W</button>
      </div>
      <div className="flex gap-0.5">
        <div className="min-w-0 flex-1">
          <BarRuler />
          <ScrubArea />
          <div className="h-[7px] bg-[#4f4f4f]" />
        </div>
        <div className="w-[358px] shrink-0">
          <LocatorTools />
        </div>
      </div>
      <div className="flex flex-col gap-[3px] bg-[#4f4f4f]">
        <div className="flex flex-col gap-0.5">
          {tracks.map((t) => (
            <TrackRow key={t.name} track={t} />
          ))}
        </div>
        <div className="flex flex-col gap-0.5">
          {returns.map((t) => (
            <TrackRow key={t.name} track={t} />
          ))}
          <MasterRow />
        </div>
      </div>
      <div className="pr-[360px]">
        <TimeRuler />
      </div>
    </div>
    <div className="flex w-[23px] shrink-0 flex-col">
      <div className="flex h-[46px] flex-col items-end gap-1">
        <RoundToggle label="Arrangement view">
          <path d="M4 4h11v1.8H4zM4 7.1h11v1.8H4zM4 10.2h11V12H4zM4 13.3h11v1.8H4z" fill="#ffab2a" />
        </RoundToggle>
        <RoundToggle label="Session view">
          <path d="M4 4h1.8v11H4zM7.1 4h1.8v11H7.1zM10.2 4H12v11h-1.8zM13.3 4h1.8v11h-1.8z" fill="#757575" />
        </RoundToggle>
      </div>
      <div className="flex flex-1 flex-col gap-[58px] rounded-r bg-[#414141] pt-[11px] pb-[26px] pl-[3px]">
        <div className="ml-[3px] w-[7px] flex-1 rounded-full bg-[#303030]" />
        <div className="flex flex-col gap-1.5">
          {dots.map(([text, on]) => (
            <button
              key={text}
              className={clsx(
                "flex size-[13px] items-center justify-center rounded-full text-[7px] leading-none font-semibold",
                on ? "bg-[#ffab2a] text-[#414141]" : "bg-[#1c1c1c] text-[#757575]"
              )}
            >
              {text}
            </button>
          ))}
        </div>
      </div>
    </div>
  </main>
);

const DeviceStrip = () => (
  <div className="flex w-[111px] items-center justify-between rounded bg-[#4f4f4f] px-1">
    <span className="text-[10px] font-semibold text-black">BASS</span>
    <svg viewBox="0 0 75 16" className="h-4 w-[75px]">
      {[0, 10, 20, 56, 66].map((x) => (
        <g key={x}>
          <rect x={x} width="8" height="16" fill="#757575" />
          <rect x={x + 2} y="2" width="4" height="1" fill="#5b6b70" />
        </g>
      ))}
      <rect x="30" width="24" height="16" fill="#757575" />
      <rect x="37" y="2" width="12" height="7" fill="#1c1c1c" />
      <path d="M32 4h2M32 7h2M32 10h2M32 13h2M51 3h2M51 6h2M51 9h2M51 12h2M38 12h3M43 12h3M38 14h3M43 14h3" stroke="#555" />
    </svg>
  </div>
);

const StatusBar = () => (
  <footer className="flex items-center gap-2 p-2">
    <RoundToggle label="Toggle info"><path d="M5 4.5v10l9.5-5z" fill="#6a6a6a" /></RoundToggle>
    <div className="flex h-[22px] flex-1 items-stretch gap-2">
      <div className="flex-1 rounded border-3 border-[#4f4f4f] bg-[#7c7c7c] pl-[7px] text-[10px] leading-4 font-medium text-black">
        Insert Mark 67.1.1 (Time: 2:21:429)
      </div>
      <div className="w-[206px] rounded border-3 border-[#4f4f4f] bg-[#7c7c7c]" />
      <DeviceStrip />
    </div>
    <RoundToggle label="Toggle devices"><path d="M14 4.5v10l-9.5-5z" fill="#6a6a6a" /></RoundToggle>
  </footer>
);

export default function App() {
  return (
    <div className="flex min-h-screen flex-col bg-[#636363] font-['Inter',sans-serif] tabular-nums">
      <TopBar />
      <div className="flex flex-1 gap-2 px-2">
        <Browser />
        <Arrangement />
      </div>
      <StatusBar />
    </div>
  );
}
